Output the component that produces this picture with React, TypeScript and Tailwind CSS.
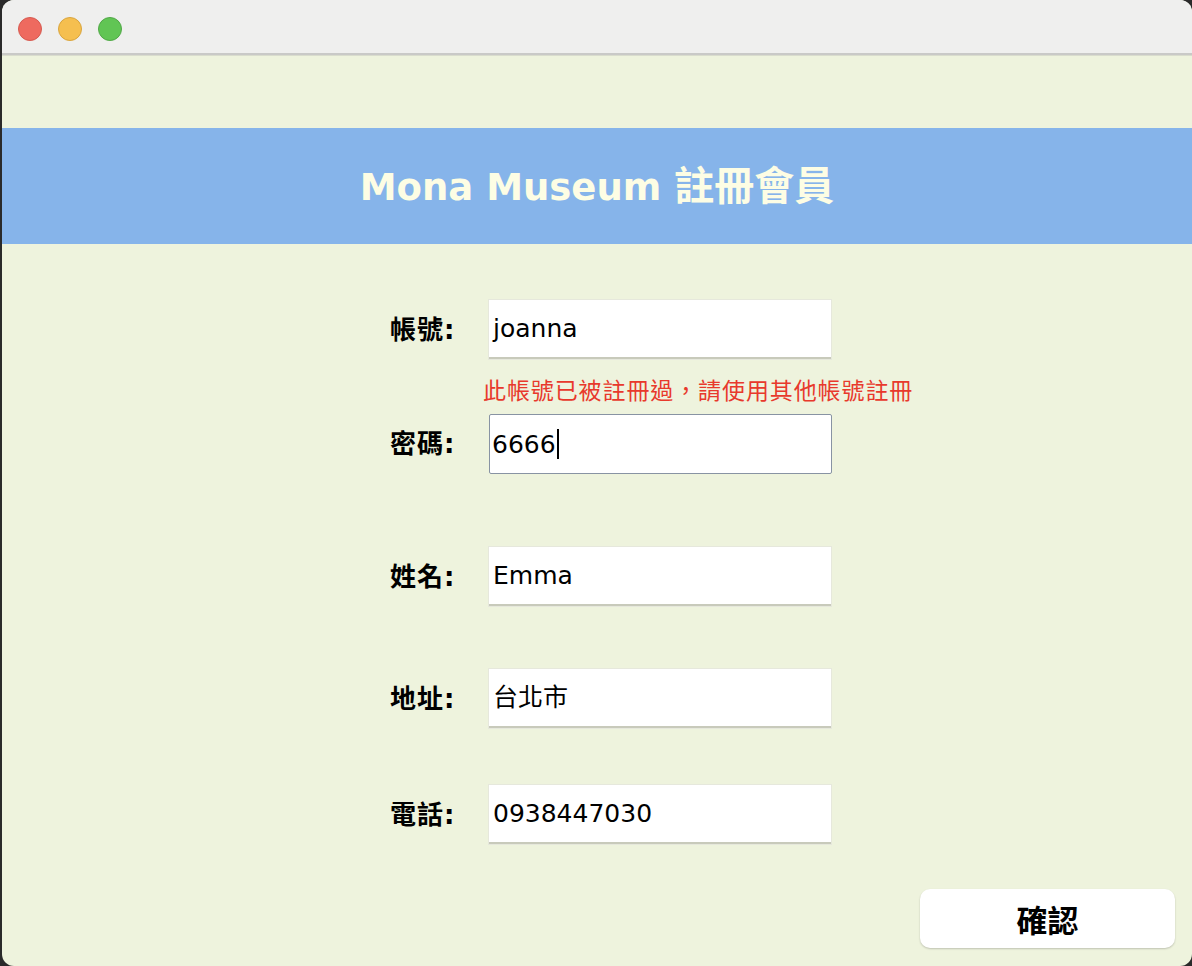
import React from "react";

const LATIN = "font-['DejaVu_Sans','Noto_Sans_CJK_TC',sans-serif]";

function Field({ label, value, focused = false }: { label: string; value: string; focused?: boolean }) {
  return (
    <div className="flex items-center">
      <div className={`w-[99px] text-[26px] font-bold text-black ${LATIN} leading-none tracking-[1px]`}>{label}</div>
      <div
        className={
          focused
            ? "w-[343px] h-[60px] bg-white border-[1.5px] border-[#8893a3] rounded-[2px] flex items-center pl-[2px]"
            : "w-[342px] h-[59px] bg-white border-b-2 border-[#c8cabb] shadow-[0_0_0_1px_#e6e8dc] flex items-center pl-[4px]"
        }
      >
        <span className={`text-[25px] text-black leading-none ${LATIN}`}>{value}</span>
        {focused && <span className="ml-[1px] w-[2px] h-[30px] bg-black" />}
      </div>
    </div>
  );
}

export default function App() {
  return (
    <div className="w-[1192px] h-[966px] bg-[#2a2a2a] pl-[2px] overflow-hidden">
      <div className="w-[1190px] h-[966px] rounded-[12px] overflow-hidden bg-[#eef3dd] flex flex-col">
        <div className="h-[53px] bg-[#efefee] flex items-center pl-[16px] gap-[16px] pt-[4px] shrink-0">
          <div className="w-[24px] h-[24px] rounded-full bg-[#ee6a5f] border border-[#d65a50]" />
          <div className="w-[24px] h-[24px] rounded-full bg-[#f5bf4f] border border-[#d9a53e]" />
          <div className="w-[24px] h-[24px] rounded-full bg-[#61c554] border border-[#51a847]" />
        </div>
        <div className="h-[2px] bg-[#c9c9c7] shrink-0" />
        <div className="h-[1px] bg-[#d9dccd] shrink-0" />
        <div className="mt-[72px] h-[116px] bg-[#86b4ea] flex items-center justify-center shrink-0">
          <span className={`text-[37px] font-bold text-[#fdfde4] leading-none ${LATIN}`}>
            Mona Museum <span className="text-[40px]">註冊會員</span>
          </span>
        </div>
        <div className="pl-[388px] mt-[56px] flex flex-col">
          <Field label="帳號:" value="joanna" />
          <div className="mt-[18px] h-[24px] pl-[93px] text-[23px] tracking-[0.9px] leading-[24px] text-[#e8392c] font-['Noto_Sans_CJK_TC',sans-serif]">
            此帳號已被註冊過，請使用其他帳號註冊
          </div>
          <div className="mt-[13px]">
            <Field label="密碼:" value="6666" focused />
          </div>
          <div className="mt-[73px]">
            <Field label="姓名:" value="Emma" />
          </div>
          <div className="mt-[63px]">
            <Field label="地址:" value="台北市" />
          </div>
          <div className="mt-[57px]">
            <Field label="電話:" value="0938447030" />
          </div>
        </div>
        <div className="flex justify-end pr-[17px] mt-[45px]">
          <button className="w-[255px] h-[59px] bg-white rounded-[10px] shadow-[0_1px_2px_rgba(0,0,0,0.2)] flex items-center justify-center">
            <span className="text-[31px] font-bold text-black leading-none font-['Noto_Sans_CJK_TC',sans-serif]">確認</span>
          </button>
        </div>
      </div>
    </div>
  );
}
